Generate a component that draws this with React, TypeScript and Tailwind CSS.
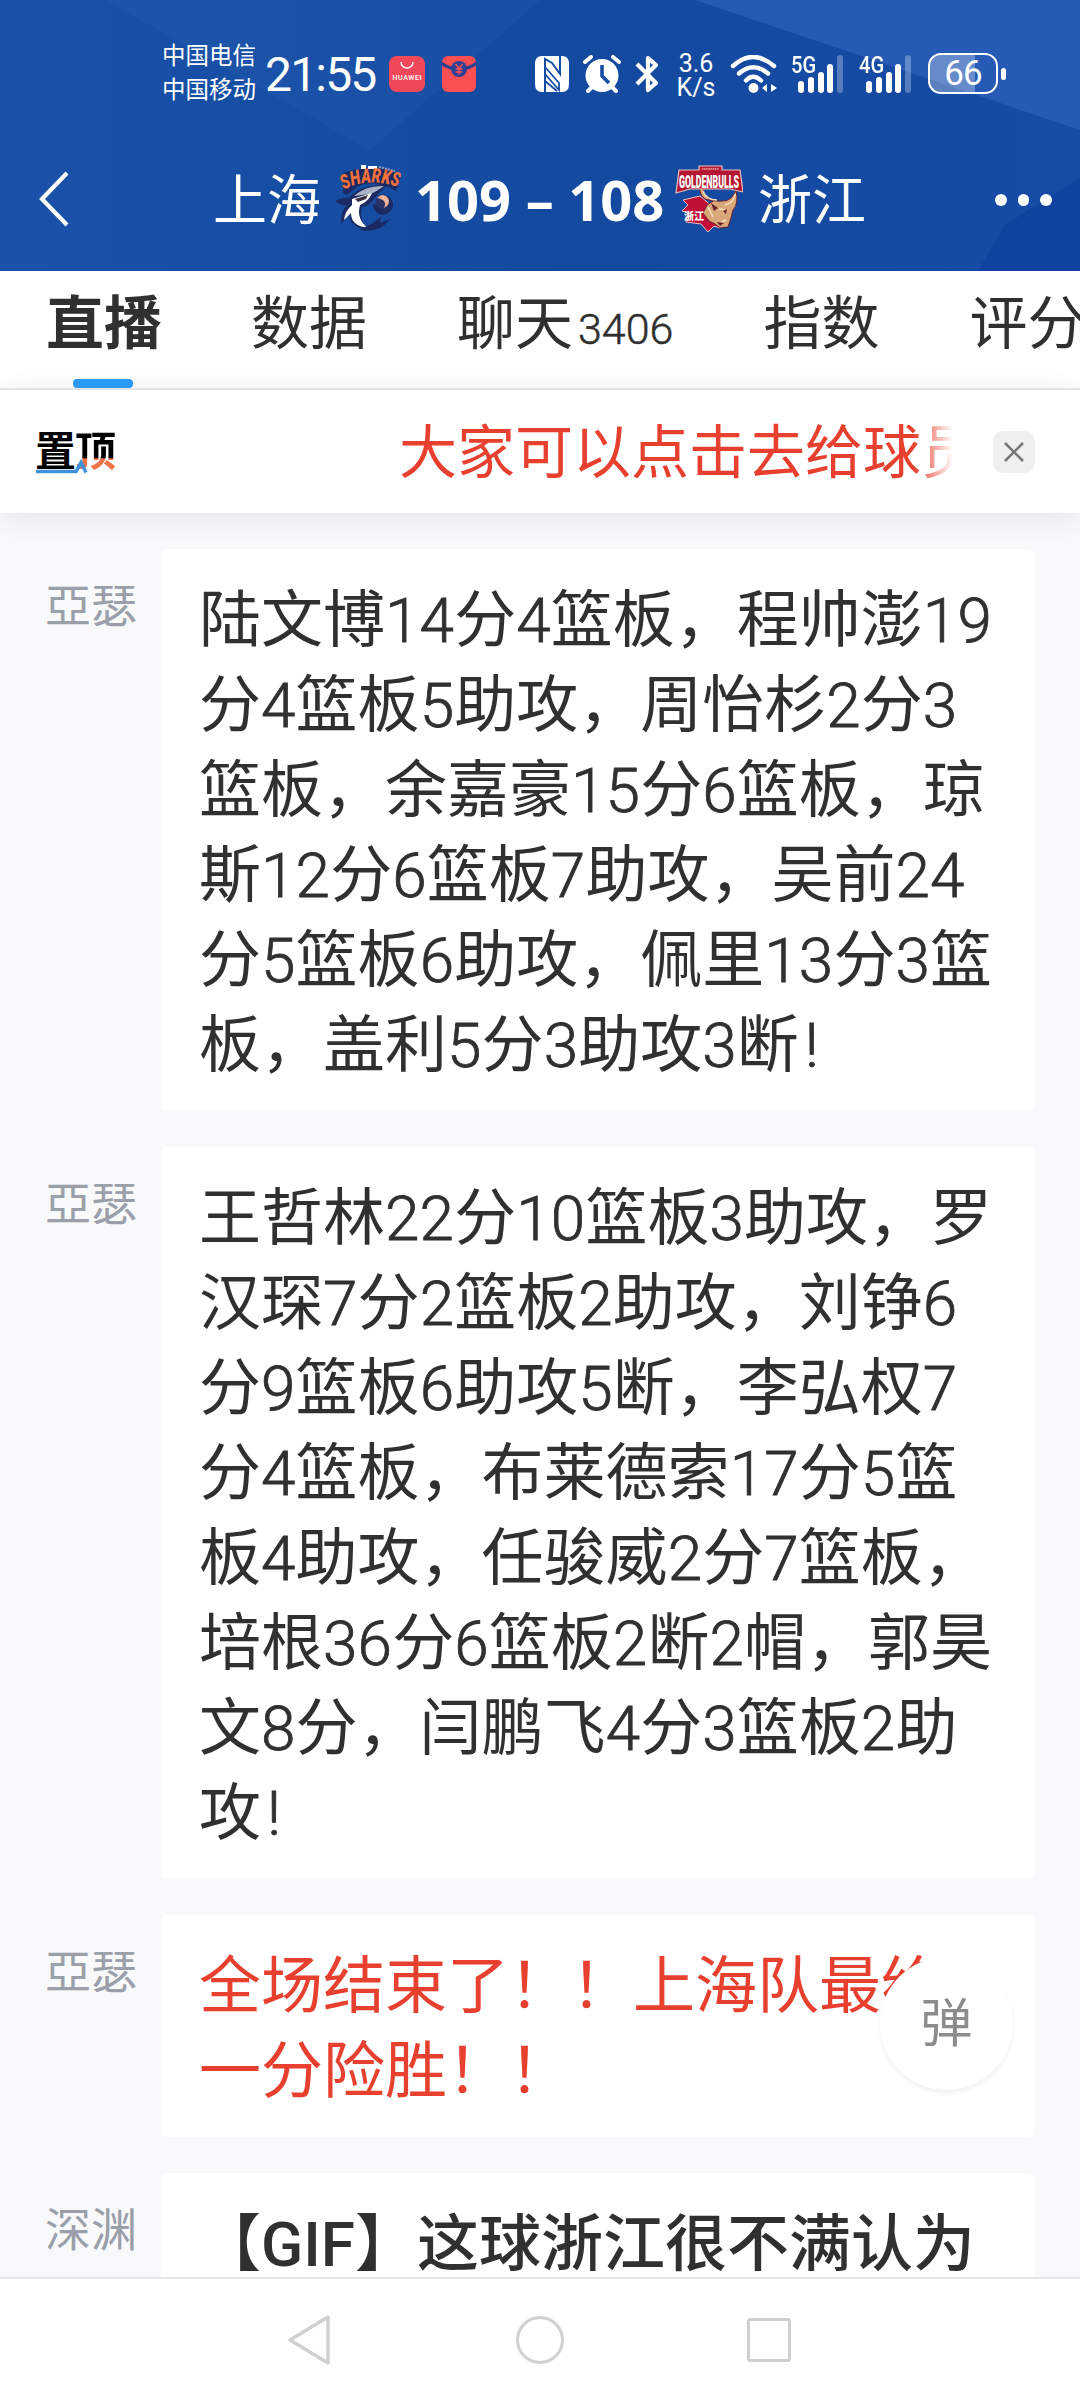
import React from "react";

type Message = {
  author: string;
  lines: string[];
  tone: string;
};

const messages: Message[] = [
  {
    author: "亞瑟",
    tone: "text-[#303030]",
    lines: [
      "陆文博14分4篮板，程帅澎19",
      "分4篮板5助攻，周怡杉2分3",
      "篮板，余嘉豪15分6篮板，琼",
      "斯12分6篮板7助攻，吴前24",
      "分5篮板6助攻，佩里13分3篮",
      "板，盖利5分3助攻3断!",
    ],
  },
  {
    author: "亞瑟",
    tone: "text-[#303030]",
    lines: [
      "王哲林22分10篮板3助攻，罗",
      "汉琛7分2篮板2助攻，刘铮6",
      "分9篮板6助攻5断，李弘权7",
      "分4篮板，布莱德索17分5篮",
      "板4助攻，任骏威2分7篮板，",
      "培根36分6篮板2断2帽，郭昊",
      "文8分，闫鹏飞4分3篮板2助",
      "攻!",
    ],
  },
  {
    author: "亞瑟",
    tone: "text-[#e8402f]",
    lines: ["全场结束了！！上海队最终", "一分险胜！！"],
  },
  {
    author: "深渊",
    tone: "text-[#303030] font-medium",
    lines: ["【GIF】这球浙江很不满认为"],
  },
];

const Signal: React.FC<{ label: string }> = ({ label }) => (
  <div className="relative h-[38px] w-[54px]">
    <svg viewBox="0 0 54 38" className="h-full w-full" fill="#fff">
      <rect x="7" y="26" width="6" height="12" rx="3" />
      <rect x="17" y="22" width="6" height="16" rx="3" />
      <rect x="27" y="17" width="6" height="21" rx="3" />
      <rect x="36" y="9" width="6" height="29" rx="3" />
      <rect x="46" y="0" width="6" height="38" rx="3" opacity=".28" />
    </svg>
    <span className="absolute -top-px left-0 origin-left scale-x-[.84] text-[24px] leading-[22px] font-medium">
      {label}
    </span>
  </div>
);

const StatusBar: React.FC = () => (
  <div className="flex h-[144px] items-start pt-[36px] pl-[162px]">
    <div className="mt-[3px] w-[96px] text-[23.5px] leading-[34px] whitespace-nowrap">
      <div>中国电信</div>
      <div>中国移动</div>
    </div>
    <div className="mt-[14px] ml-[7px] w-[114px] text-[48px] leading-[50px] tracking-[-1.8px]">
      21:55
    </div>
    {/* Notification icons */}
    <svg viewBox="0 0 36 36" className="mt-[20px] ml-[10px] h-9 w-9">
      <rect width="36" height="36" rx="8" fill="#f2495a" />
      <path d="M12 6a6 6 0 0 0 12 0" fill="none" stroke="#fff" strokeWidth="1.4" />
      <text x="18" y="23.5" fontSize="7" fontWeight="500" fill="#fff" textAnchor="middle" textLength="29">
        HUAWEI
      </text>
    </svg>
    <svg viewBox="0 0 36 36" className="mt-[20px] ml-[16px] h-9 w-9">
      <rect x="1" width="34" height="36" rx="6" fill="#fc4f52" />
      <path d="M0 7 Q8 13 18 13 T36 7" fill="none" stroke="#2b3f96" strokeWidth="3.4" />
      <circle cx="18" cy="13" r="8" fill="#2b3f96" />
      <path d="M14.5 8l3.5 4.5 3.5-4.5M18 12.500v6M14.500 13h7M14.500 16h7" fill="none" stroke="#fc4f52" strokeWidth="1.5" />
    </svg>

    {/* System icons */}
    <svg viewBox="0 0 34 36" className="mt-[20px] ml-[58px] h-9 w-[34px]">
      <path d="M7 0h20q7 0 7 8v20q0 8-7 8H7q-7 0-7-8V8q0-8 7-8z" fill="#fff" />
      <path d="M10 36V3l7 4 8 11V0" fill="none" stroke="#174da6" strokeWidth="2" />
      <path d="M10 11l14 16v7L10 18zM10 25l12 10" fill="none" stroke="#174da6" strokeWidth="1.800" />
    </svg>
    <svg viewBox="0 0 38 38" className="mt-[19px] ml-[14px] h-[38px] w-[38px]" fill="#fff">
      <circle cx="19" cy="20.500" r="16.500" />
      <path d="M2 7l6-5M36 7l-6-5M5 36l5-5M33 36l-5-5" stroke="#fff" strokeWidth="4" strokeLinecap="round" />
      <path d="M19 10v11l7 7" fill="none" stroke="#174da6" strokeWidth="3.600" />
    </svg>
    <svg viewBox="0 0 24 38" className="mt-[19px] ml-[14px] h-[38px] w-6">
      <path d="M2 9l19 19-8 7V3l8 7L2 29" fill="none" stroke="#fff" strokeWidth="4.200" strokeLinejoin="round" />
    </svg>
    <div className="mt-[16px] ml-[17px] w-[40px] text-center text-[25px] leading-[24px]">
      <div>3.6</div>
      <div>K/s</div>
    </div>
    <svg viewBox="0 0 48 38" className="mt-[19px] ml-[14px] h-[38px] w-12">
      <g fill="none" stroke="#fff" strokeWidth="4.400" strokeLinecap="round">
        <path d="M3 11Q23-7 44 11" />
        <path d="M9 18.500Q23 6 38 18.500" />
        <path d="M16 25.500Q23 18 31 25.500" />
      </g>
      <circle cx="23.500" cy="33" r="5" fill="#fff" />
      <path d="M37 29v8l-5-4zM41 29v8l6-4z" fill="#fff" />
    </svg>
    <div className="mt-[19px] ml-[13px]">
      <Signal label="5G" />
    </div>
    <div className="mt-[19px] ml-[14px]">
      <Signal label="4G" />
    </div>
    <div className="mt-[17px] ml-[15px] flex items-center gap-[3px]">
      <div className="flex h-[41px] w-[70px] items-center justify-center rounded-[13px] border-[2.5px] border-white bg-linear-to-r from-white/30 from-68% to-transparent to-68% text-[35px] leading-none tracking-[-1px]">
        66
      </div>
      <div className="h-3 w-[5px] rounded-full bg-white" />
    </div>
  </div>
);

const SharksLogo: React.FC = () => (
  <svg viewBox="0 0 66 68" className="h-[68px] w-[66px]">
    <defs>
      <path id="sharks-arc" d="M9 26Q32 12 66 24" />
    </defs>
    <path d="M8 9Q22 4 40 4t25 11l-4 12Q38 14 22 23l-10 8-4-2z" fill="#1c2a63" />
    <path d="M26 1h5v4h-5zM33 2h9v3h-9z" fill="#fff" />
    <path d="M44 3l16 4" stroke="#8f9cc8" strokeWidth="2" strokeDasharray="2 1" />
    <text fontSize="20" fontWeight="900" fontStyle="italic" fill="#f2703a">
      <textPath href="#sharks-arc" textLength="56" lengthAdjust="spacingAndGlyphs">
        SHARKS
      </textPath>
    </text>
    <path d="M0 37q8-4 14-3Q24 21 53 20q-8 8-14 15-4 7-12 8-4 14 8 23Q14 64 14 50l-8 10q-1-12 6-19-7 1-12-4z" fill="#1c2a63" />
    <path d="M19 32Q31 21 49 22q-8 6-14 8-7 1-16 2z" fill="#a9b2c6" />
    <path d="M17 35l20-6q-3 8-12 12-4 14 8 23Q16 62 16 49l-7 7q1-9 8-15z" fill="#fff" />
    <path d="M20 35l13-4-2 4-8 3z" fill="#3b3044" />
    <path d="M24 66Q45 70 55 55l-10 4 1-6-8 6zM38 40a10 10 0 1 0 15-8q6 11-15 8z" fill="#1c2a63" />
    <circle cx="48" cy="38" r="7.500" fill="#283269" />
    <path d="M42 34q6-6 11 0 3 6-4 10 4-8-7-10z" fill="#f3b29b" />
  </svg>
);

const BullsLogo: React.FC = () => (
  <svg viewBox="0 0 68 68" className="h-[68px] w-[68px]">
    {/* Mane */}
    <path d="M25 31l-17 4 5 5-6 6 6 2-2 9 15 2 7 8 6-6 6 2 6-10z" fill="#c10f36" stroke="#e9c3bb" strokeWidth="1" strokeLinejoin="round" />
    {/* Head and horns */}
    <path d="M25 22q-1 8 5 12 5 2 10 1l-8 5-4 8 6 8 6 3 5 4 8-1 3-9 2-8q6-6 3-20-4 11-13 11-9 1-15-3-5-4-5-11z" fill="#d8a878" stroke="#6a1c2c" strokeWidth="1" />
    <path d="M28 26q3 9 14 9M60 29q-1 9-10 11M33 42l5 10M44 44l7 1M46 57l5-2" fill="none" stroke="#f5dcc0" strokeWidth="1.600" />
    <path d="M36 38l7 5-4 3zM52 44l-4 2 3 3zM42 57l7 1-4 3z" fill="#6f1e2d" />
    {/* Name plate */}
    <path d="M4 5h20V1h23v4h18l3 22-13-3H15L1 28z" fill="#b51634" stroke="#e9c3bb" strokeWidth="1.200" strokeLinejoin="round" />
    <path d="M27 4h17" stroke="#f3a9a5" strokeWidth="1.600" strokeDasharray="1.500 .6" />
    <text x="4" y="22.500" fontSize="17.500" fontWeight="900" fill="#fff" textLength="60" lengthAdjust="spacingAndGlyphs">
      GOLDENBULLS
    </text>
    <text x="9" y="55" fontSize="10" fontWeight="900" fill="#fff">
      浙江
    </text>
  </svg>
);

const MatchHeader: React.FC = () => (
  <div className="flex h-[127px] items-start">
    <svg viewBox="0 0 30 56" className="mt-[27px] ml-[39px] h-14 w-[30px]">
      <path d="M28 2L3 28l25 26" fill="none" stroke="#fff" strokeWidth="4.200" />
    </svg>
    <div className="mt-[20px] ml-[144px] w-[108px] text-[54px] leading-[76px] whitespace-nowrap">上海</div>
    <div className="mt-[20px] ml-[14px]">
      <SharksLogo />
    </div>
    <div className="mt-[17px] ml-[14px] w-[252px] font-['Noto_Sans'] text-[56px] leading-[76px] font-bold whitespace-nowrap">
      109 – 108
    </div>
    <div className="mt-[21px] ml-[8px]">
      <BullsLogo />
    </div>
    <div className="mt-[20px] ml-[15px] w-[108px] text-[54px] leading-[76px] whitespace-nowrap">浙江</div>
    <div className="mt-[50px] ml-[129px] flex gap-[11px]">
      <span className="size-[11.5px] rounded-full bg-white" />
      <span className="size-[11.5px] rounded-full bg-white" />
      <span className="size-[11.5px] rounded-full bg-white" />
    </div>
  </div>
);

const Tabs: React.FC = () => (
  <div className="flex h-[119px] shrink-0 gap-[90px] overflow-hidden border-b-2 border-[#e9ebed] bg-white pl-[46px] text-[58px] leading-[107px] whitespace-nowrap text-[#303030]">
    <div className="relative w-[115px] font-bold">
      直播
      <span className="absolute bottom-0 left-[27px] h-[9px] w-[60px] rounded-[4px] bg-[#2c9cfb]" />
    </div>
    <div className="w-[116px]">数据</div>
    <div className="flex w-[218px]">
      聊天
      <span className="ml-[5px] pt-[5px] text-[43px] font-light [-webkit-text-stroke:0.5px_currentColor]">3406</span>
    </div>
    <div className="w-[116px]">指数</div>
    <div className="w-[116px]">评分</div>
  </div>
);

const PinnedNotice: React.FC = () => (
  <div className="relative z-10 flex h-[123px] shrink-0 items-center bg-white pl-[35px] shadow-[0_4px_28px_rgba(40,50,70,0.10)]">
    <div className="relative w-[82px] text-[41px] leading-[60px] font-bold tracking-[-1px] whitespace-nowrap text-black">
      <span>置</span>
      <span className="bg-linear-to-b from-black from-62% to-[#ef7448] to-64% bg-clip-text text-transparent">顶</span>
      <svg viewBox="0 0 54 18" className="absolute bottom-[8px] left-0 h-[18px] w-[54px]">
        <path d="M1 15.500h40l5-9 5 10" fill="none" stroke="#3c92dd" strokeWidth="3.500" />
      </svg>
    </div>
    <div className="ml-[282px] w-[554px] overflow-hidden mask-r-from-93% pt-[3px] text-[58px] leading-[84px] whitespace-nowrap text-[#e8402f]">
      大家可以点击去给球员
    </div>
    <div className="ml-10 flex size-[42px] items-center justify-center rounded-[10px] bg-[#f0f0f0]">
      <svg viewBox="0 0 20 20" className="size-5">
        <path d="M1 1l18 18M19 1L1 19" stroke="#777" strokeWidth="2.500" />
      </svg>
    </div>
  </div>
);

const MessageRow: React.FC<{ message: Message }> = ({ message }) => (
  <div className="flex pl-[45px]">
    <div className="w-[116px] shrink-0 pt-[23px] text-[46px] leading-[68px] text-[#9a9fa9]">{message.author}</div>
    <div className="w-[874px] rounded-[6px] bg-white pt-[29px] pb-[23px] pl-[38px] text-[62px] leading-[85px] whitespace-nowrap">
      {message.lines.map((line) => (
        <div key={line} className={message.tone}>
          {/* Digits are set lighter so that they sit evenly with the characters */}
          {line.split(/(\d+|!)/).map((part, i) =>
            /^[\d!]/.test(part) ? (
              <span
                key={i}
                className={
                  part === "!"
                    ? "pl-[6px] font-light [-webkit-text-stroke:0.8px_currentColor]"
                    : "font-light tracking-[0.2px] [-webkit-text-stroke:0.8px_currentColor]"
                }
              >
                {part}
              </span>
            ) : (
              part
            )
          )}
        </div>
      ))}
    </div>
  </div>
);

const NavBar: React.FC = () => (
  <div className="flex h-[123px] shrink-0 items-center border-t-2 border-[#e6e8ea] bg-white pl-[287px]">
    <svg viewBox="0 0 44 50" className="h-[50px] w-11" fill="none" stroke="#d0d0d0" strokeWidth="3.500" strokeLinejoin="round">
      <path d="M41 2v46L3 25z" />
    </svg>
    <div className="ml-[185px] size-12 rounded-full border-[3.5px] border-[#d0d0d0]" />
    <div className="ml-[183px] size-11 rounded-[3px] border-[3.5px] border-[#d0d0d0]" />
  </div>
);

const App: React.FC = () => {
  return (
    <div className="relative flex h-[2400px] w-[1080px] flex-col overflow-hidden bg-[#f8f9fb] font-[Roboto,'Noto_Sans_CJK_SC',sans-serif]">
      <header className="relative h-[271px] shrink-0 bg-linear-to-r from-[#1a52aa] via-[#134a9f] via-55% to-[#174ba6] text-white">
        {/* Lighter and darker facets of the header background */}
        <svg viewBox="0 0 1080 271" className="absolute inset-0 h-full w-full">
          <path d="M105 0L370 150 540 0z" fill="#2f66b8" opacity=".2" />
          <path d="M695 0L1080 130V0z" fill="#265ab4" />
          <path d="M1080 178L1005 225 978 271h102z" fill="#0f409f" opacity=".8" />
        </svg>
        <div className="relative">
          <StatusBar />
          <MatchHeader />
        </div>
      </header>
      <Tabs />
      <PinnedNotice />
      <main className="flex min-h-0 flex-1 flex-col gap-9 overflow-hidden pt-9">
        {messages.map((message, i) => (
          <MessageRow key={i} message={message} />
        ))}
      </main>
      <NavBar />

      {/* Floating bullet-comment button */}
      <button className="absolute top-[1957px] left-[880px] flex size-[133px] items-center justify-center rounded-full bg-white pt-[3px] text-[52px] text-[#8c8c8c] shadow-[0_3px_5px_rgba(0,0,0,0.06)]">
        弹
      </button>
    </div>
  );
};

export default App;
